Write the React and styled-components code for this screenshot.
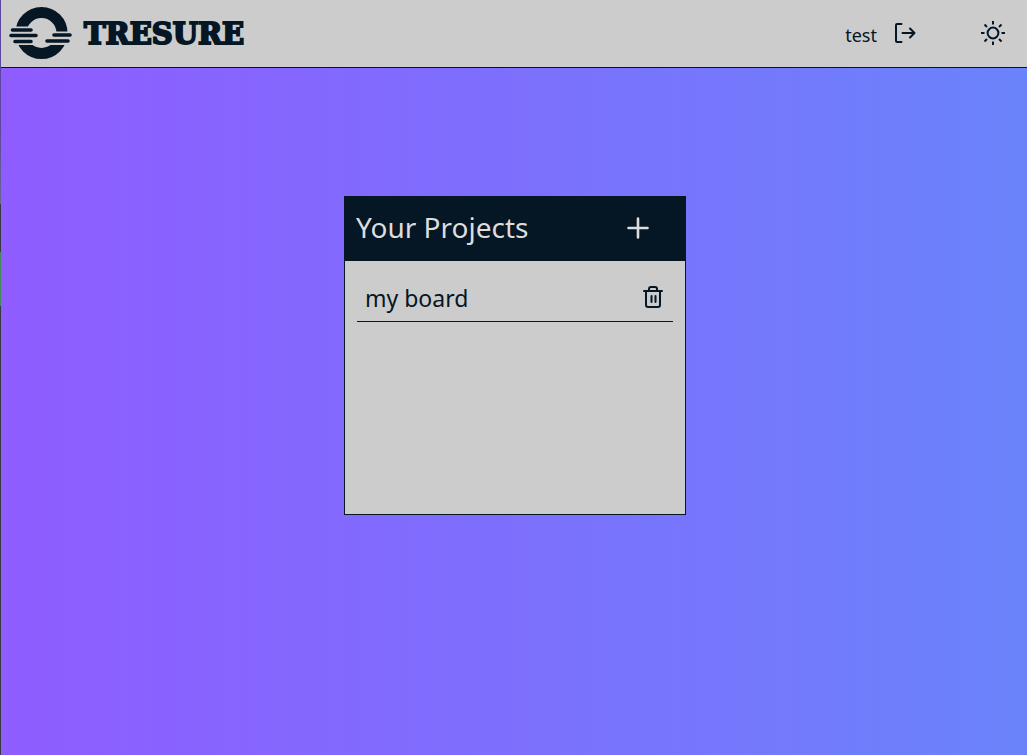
import React from "react";
import styled, { createGlobalStyle, ThemeProvider } from "styled-components";

const theme = {
  ink: "#051625",
  paper: "#cccccc",
  light: "#dddddd",
};

const GlobalStyle = createGlobalStyle`
  *, *::before, *::after { box-sizing: border-box; }
  body {
    margin: 0;
    font-family: "Segoe UI", "Noto Sans", sans-serif;
    color: ${theme.ink};
  }
`;

const Page = styled.div`
  min-height: 100vh;
  display: flex;
  flex-direction: column;
  border-left: 1px solid;
  border-image: linear-gradient(
    #5b45a0 0 120px, #6b6590 204px, #3a3a42 204px 252px,
    #3f8a58 252px 306px, #3a3a42 306px
  ) 1;
  background: linear-gradient(90deg, #8f5cff, #6a83fb);
`;

const Header = styled.header`
  display: flex;
  align-items: center;
  justify-content: space-between;
  height: 68px;
  padding: 0 21px 2px 8px;
  background: ${(p) => p.theme.paper};
  border-bottom: 1px solid ${(p) => p.theme.ink};
`;

const Brand = styled.a`
  display: flex;
  align-items: center;
  gap: 12px;
  color: inherit;
  text-decoration: none;
`;

const BrandName = styled.span`
  font-family: "DejaVu Serif", serif;
  font-weight: 700;
  font-size: 29px;
  line-height: 32px;
  padding-top: 2px;
  -webkit-text-stroke: 2px ${(p) => p.theme.ink};
`;

const Actions = styled.div`
  display: flex;
  align-items: center;
  gap: 63px;
`;

const Account = styled.div`
  display: flex;
  align-items: center;
  gap: 16px;
`;

const UserName = styled.span`
  font-size: 18px;
  line-height: 24px;
  padding-top: 4px;
`;

const IconButton = styled.button`
  display: flex;
  padding: 0;
  border: 0;
  background: none;
  color: inherit;
  cursor: pointer;
`;

const Main = styled.main`
  flex: 1;
  display: flex;
  justify-content: center;
  align-items: flex-start;
  padding: 128px 16px 16px 18px;
`;

const Card = styled.section`
  width: 100%;
  max-width: 342px;
  min-height: 319px;
  background: ${(p) => p.theme.paper};
  border: 1px solid ${(p) => p.theme.ink};
`;

const CardHeader = styled.div`
  display: flex;
  align-items: center;
  justify-content: space-between;
  height: 64px;
  padding: 0 35px 2px 11px;
  background: ${(p) => p.theme.ink};
  color: ${(p) => p.theme.light};
`;

const Title = styled.h1`
  margin: 0;
  padding-bottom: 2px;
  font-weight: 400;
  font-size: 28px;
  line-height: 40px;
`;

const ProjectList = styled.ul`
  list-style: none;
  margin: 0;
  padding: 12px;
`;

const ProjectRow = styled.li`
  display: flex;
  align-items: center;
  justify-content: space-between;
  height: 49px;
  padding: 0 8px;
  border-bottom: 1px solid ${(p) => p.theme.ink};
`;

const ProjectLink = styled.a`
  padding-top: 2px;
  color: inherit;
  text-decoration: none;
  font-size: 23px;
  line-height: 32px;
`;

const Icon = ({ size = 24, stroke = 2, children }) => (
  <svg width={size} height={size} viewBox={`0 0 ${size} ${size}`} fill="none" stroke="currentColor"
    strokeWidth={stroke} strokeLinecap="round" strokeLinejoin="round" aria-hidden="true">
    {children}
  </svg>
);

const Logo = () => (
  <svg width="63" height="54" viewBox="0 0 63 54" aria-hidden="true">
    <circle cx="32.5" cy="27" r="20.5" fill="none" stroke={theme.ink} strokeWidth="11" />
    <path d="M0 20.5H32V39H0zM38 25.5H63V39H38z" fill={theme.paper} />
    <path d="M3.5 24H22M2 29.5H27M6 35.5H22M45 29H61M38 35H59" stroke={theme.ink} strokeWidth="3.6" strokeLinecap="round" />
  </svg>
);

export default function App() {
  return (
    <ThemeProvider theme={theme}>
      <GlobalStyle />
      <Page>
        <Header>
          <Brand href="#">
            <Logo />
            <BrandName>TRESURE</BrandName>
          </Brand>
          <Actions>
            <Account>
              <UserName>test</UserName>
              <IconButton aria-label="Log out">
                <Icon>
                  <path d="M8.500 3H4Q3 3 3 4V20Q3 21 4 21H8.500" />
                  <path d="M9.500 12H21.500M17 7.500L21.500 12L17 16.500" />
                </Icon>
              </IconButton>
            </Account>
            <IconButton aria-label="Toggle theme">
              <Icon size={26} stroke={2}>
                <circle cx="13" cy="13" r="5.400" />
                <path strokeLinecap="butt" d="M13 1V4.500M13 21.500V25M1 13H4.500M21.500 13H25M4.500 4.500L7 7M19 19L21.500 21.500M4.500 21.500L7 19M19 7L21.500 4.500" />
              </Icon>
            </IconButton>
          </Actions>
        </Header>
        <Main>
          <Card>
            <CardHeader>
              <Title>Your Projects</Title>
              <IconButton aria-label="Add project">
                <Icon stroke={2.6}>
                  <path d="M12 2.500V21.500M2.500 12H21.500" />
                </Icon>
              </IconButton>
            </CardHeader>
            <ProjectList>
              <ProjectRow>
                <ProjectLink href="#">my board</ProjectLink>
                <IconButton aria-label="Delete my board">
                  <Icon>
                    <path d="M3 6H21M5 6V20Q5 22 7 22H17Q19 22 19 20V6M8 6V4Q8 2 10 2H14Q16 2 16 4V6M10.500 11V17M14.500 11V17" />
                  </Icon>
                </IconButton>
              </ProjectRow>
            </ProjectList>
          </Card>
        </Main>
      </Page>
    </ThemeProvider>
  );
}
